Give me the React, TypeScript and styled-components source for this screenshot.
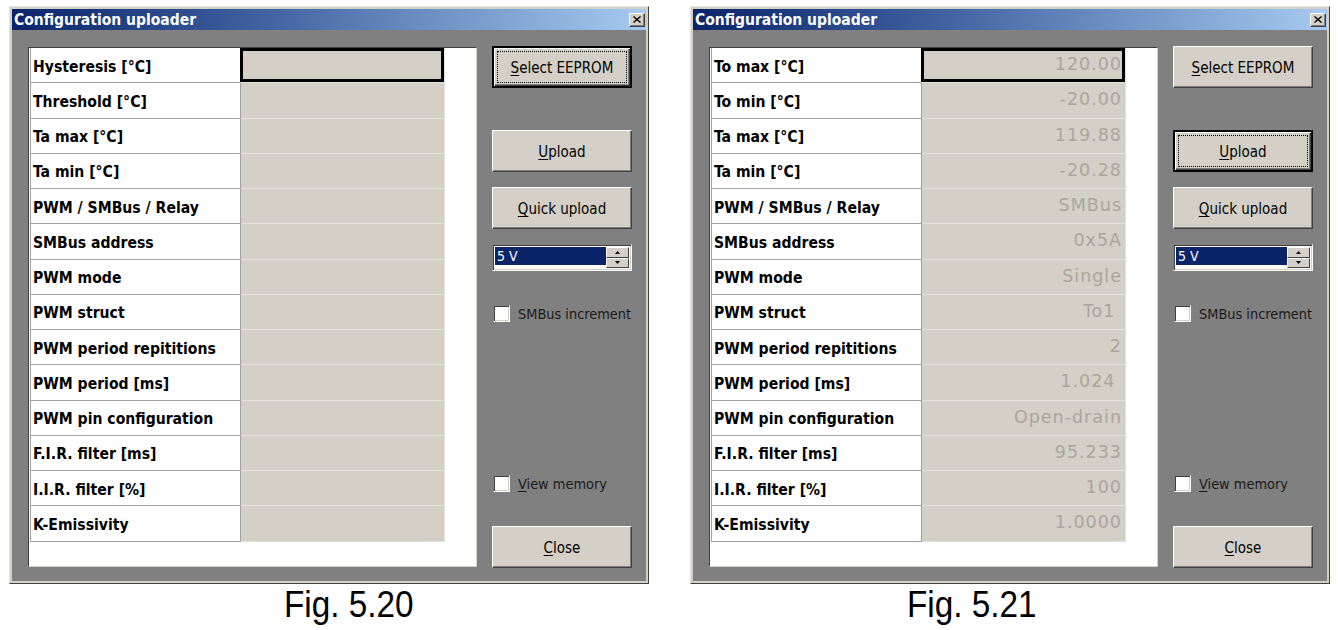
import React from "react";
import styled, { createGlobalStyle, css } from "styled-components";

const UI_FONT = `"DejaVu Sans Condensed", "DejaVu Sans", "Liberation Sans", sans-serif`;

const Global = createGlobalStyle`
  html, body { margin: 0; padding: 0; background: #ffffff; }
  body { font-family: ${UI_FONT}; }
  * { box-sizing: border-box; }
`;

const Page = styled.div`
  display: flex;
  gap: 41px;
  padding: 6px 0 0 9px;
  width: 1338px;
  height: 630px;
  overflow: hidden;
`;

const Figure = styled.div`
  display: flex;
  flex-direction: column;
  width: 640px;
`;

const Window = styled.div`
  width: 640px;
  height: 578px;
  padding: 2px;
  background: #d4d0c8;
  border: 1px solid;
  border-color: #e8e6e1 #404040 #404040 #e8e6e1;
  display: flex;
  flex-direction: column;
`;

const TitleBar = styled.div`
  height: 21px;
  flex: none;
  display: flex;
  align-items: center;
  justify-content: space-between;
  padding: 0 1px 0 2px;
  background: linear-gradient(to right, #0a246a 0%, #3a5a9a 35%, #a6caf0 100%);
`;

const TitleText = styled.span`
  color: #ffffff;
  font-family: ${UI_FONT};
  font-weight: bold;
  font-size: 15.5px;
  white-space: nowrap;
`;

const TitleClose = styled.div`
  width: 16px;
  height: 14px;
  background: #d4d0c8;
  border: 1px solid;
  border-color: #ffffff #404040 #404040 #ffffff;
  box-shadow: inset -1px -1px 0 #808080;
  display: flex;
  align-items: center;
  justify-content: center;
`;

const Body = styled.div`
  flex: 1;
  background: #808080;
  display: flex;
  gap: 15px;
  padding: 16px 14px 13px 16px;
`;

const GridPanel = styled.div`
  width: 449px;
  height: 520px;
  margin-top: 1px;
  background: #ffffff;
  border: 1px solid;
  border-color: #404040 #d4d0c8 #d4d0c8 #404040;
  padding-left: 1px;
`;

const Table = styled.div`
  display: grid;
  grid-template-columns: 210px 204px;
  grid-auto-rows: 35.26px;
  width: 415px;
  border-left: 1px solid #a0a0a0;
`;

const LabelCell = styled.div`
  background: #ffffff;
  border-right: 1px solid #a0a0a0;
  border-bottom: 1px solid #a0a0a0;
  display: flex;
  align-items: center;
  padding: 3px 0 0 2px;
  font-family: ${UI_FONT};
  font-weight: bold;
  font-size: 15.6px;
  color: #000000;
  white-space: nowrap;
`;

const ValueCell = styled.div<{ $focus?: boolean }>`
  background: #d4d0c8;
  border-right: 1px solid #e4e2dd;
  border-bottom: 1px solid #e4e2dd;
  display: flex;
  align-items: center;
  justify-content: flex-end;
  padding: 0 3px 2px 0;
  font-family: "DejaVu Sans", "Liberation Sans", sans-serif;
  font-weight: normal;
  font-size: 17.5px;
  letter-spacing: 1px;
  color: #aaa69e;
  white-space: nowrap;
  ${(p) =>
    p.$focus &&
    css`
      margin-left: -1px;
      box-shadow: inset 0 0 0 3px #000000;
    `}
`;

const Column = styled.div`
  width: 140px;
  display: flex;
  flex-direction: column;
`;

const Button = styled.div<{ $default?: boolean; $mt?: number }>`
  position: relative;
  width: 140px;
  height: 42px;
  margin-top: ${(p) => p.$mt ?? 0}px;
  flex: none;
  background: #d4d0c8;
  display: flex;
  align-items: center;
  justify-content: center;
  padding-top: 2px;
  font-family: ${UI_FONT};
  font-size: 15px;
  color: #000000;
  border: 1px solid;
  border-color: #ffffff #404040 #404040 #ffffff;
  box-shadow: inset -1px -1px 0 #808080;
  ${(p) =>
    p.$default &&
    css`
      border: 2px solid #000000;
      box-shadow: inset 1px 1px 0 #ffffff, inset -1px -1px 0 #404040,
        inset -2px -2px 0 #808080;
      &::after {
        content: "";
        position: absolute;
        inset: 3px;
        border: 1px dotted #000000;
      }
    `}
`;

const Mnemonic = styled.span`
  text-decoration: underline;
  text-underline-offset: 2px;
`;

const Spin = styled.div`
  width: 140px;
  height: 27px;
  margin-top: 15px;
  flex: none;
  display: flex;
  background: #ffffff;
  border: 1px solid;
  border-color: #808080 #ffffff #ffffff #808080;
  box-shadow: inset 1px 1px 0 #404040, inset -1px -1px 0 #d4d0c8;
  padding: 2px;
`;

const SpinField = styled.div`
  flex: 1;
  display: flex;
  flex-direction: column;
`;

const SpinValue = styled.div`
  height: 18px;
  background: #0a246a;
  color: #ffffff;
  font-family: ${UI_FONT};
  font-size: 14px;
  line-height: 18px;
  padding-left: 2px;
`;

const SpinButtons = styled.div`
  width: 23px;
  display: flex;
  flex-direction: column;
`;

const SpinBtn = styled.div`
  flex: 1;
  background: #d4d0c8;
  border: 1px solid;
  border-color: #ffffff #404040 #404040 #ffffff;
  display: flex;
  align-items: center;
  justify-content: center;
`;

const CheckRow = styled.div<{ $auto?: boolean; $mt?: number }>`
  display: flex;
  align-items: center;
  gap: 8px;
  margin-left: 1px;
  height: 17px;
  flex: none;
  margin-top: ${(p) => (p.$auto ? "auto" : `${p.$mt ?? 0}px`)};
  font-family: ${UI_FONT};
  font-size: 14.4px;
  color: #1a1a1a;
  white-space: nowrap;
`;

const CheckBox = styled.div`
  width: 17px;
  height: 17px;
  flex: none;
  background: #ffffff;
  border: 1px solid;
  border-color: #808080 #ffffff #ffffff #808080;
  box-shadow: inset 1px 1px 0 #404040, inset -1px -1px 0 #d4d0c8;
`;

const Caption = styled.div<{ $left: number }>`
  margin-top: 2px;
  padding-left: ${(p) => p.$left}px;
  font-family: "Liberation Sans", Arial, sans-serif;
  font-size: 37px;
  line-height: 37px;
  color: #000000;
`;

const CaptionText = styled.span`
  display: inline-block;
  transform: scaleX(0.9);
  transform-origin: left center;
  white-space: nowrap;
`;

const CloseGlyph = () => (
  <svg width="8" height="7" viewBox="0 0 8 7">
    <path d="M0.5 0.5 L7.5 6.5 M7.5 0.5 L0.5 6.5" stroke="#000" strokeWidth="1.4" />
  </svg>
);

const Up = () => (
  <svg width="5" height="3" viewBox="0 0 5 3">
    <path d="M2.5 0 L5 3 L0 3 Z" fill="#000" />
  </svg>
);

const Down = () => (
  <svg width="5" height="3" viewBox="0 0 5 3">
    <path d="M0 0 L5 0 L2.5 3 Z" fill="#000" />
  </svg>
);

type Row = { label: string; value?: string };

const rows1: Row[] = [
  { label: "Hysteresis [°C]" },
  { label: "Threshold [°C]" },
  { label: "Ta max [°C]" },
  { label: "Ta min [°C]" },
  { label: "PWM / SMBus / Relay" },
  { label: "SMBus address" },
  { label: "PWM mode" },
  { label: "PWM struct" },
  { label: "PWM period repititions" },
  { label: "PWM period [ms]" },
  { label: "PWM pin configuration" },
  { label: "F.I.R. filter [ms]" },
  { label: "I.I.R. filter [%]" },
  { label: "K-Emissivity" },
];

const rows2: Row[] = [
  { label: "To max [°C]", value: "120.00" },
  { label: "To min [°C]", value: "-20.00" },
  { label: "Ta max [°C]", value: "119.88" },
  { label: "Ta min [°C]", value: "-20.28" },
  { label: "PWM / SMBus / Relay", value: "SMBus" },
  { label: "SMBus address", value: "0x5A" },
  { label: "PWM mode", value: "Single" },
  { label: "PWM struct", value: "To1\u00a0" },
  { label: "PWM period repititions", value: "2" },
  { label: "PWM period [ms]", value: "1.024\u00a0" },
  { label: "PWM pin configuration", value: "Open-drain" },
  { label: "F.I.R. filter [ms]", value: "95.233" },
  { label: "I.I.R. filter [%]", value: "100" },
  { label: "K-Emissivity", value: "1.0000" },
];

const Uploader: React.FC<{ rows: Row[]; defaultBtn: "select" | "upload" }> = ({ rows, defaultBtn }) => (
  <Window>
    <TitleBar>
      <TitleText>Configuration uploader</TitleText>
      <TitleClose>
        <CloseGlyph />
      </TitleClose>
    </TitleBar>
    <Body>
      <GridPanel>
        <Table>
          {rows.map((r, i) => (
            <React.Fragment key={r.label}>
              <LabelCell>{r.label}</LabelCell>
              <ValueCell $focus={i === 0}>{r.value ?? ""}</ValueCell>
            </React.Fragment>
          ))}
        </Table>
      </GridPanel>
      <Column>
        <Button $default={defaultBtn === "select"}>
          <span>
            <Mnemonic>S</Mnemonic>elect EEPROM
          </span>
        </Button>
        <Button $mt={42} $default={defaultBtn === "upload"}>
          <span>
            <Mnemonic>U</Mnemonic>pload
          </span>
        </Button>
        <Button $mt={15}>
          <span>
            <Mnemonic>Q</Mnemonic>uick upload
          </span>
        </Button>
        <Spin>
          <SpinField>
            <SpinValue>5 V</SpinValue>
          </SpinField>
          <SpinButtons>
            <SpinBtn>
              <Up />
            </SpinBtn>
            <SpinBtn>
              <Down />
            </SpinBtn>
          </SpinButtons>
        </Spin>
        <CheckRow $mt={34}>
          <CheckBox />
          <span>SMBus increment</span>
        </CheckRow>
        <CheckRow $auto>
          <CheckBox />
          <span>
            <Mnemonic>V</Mnemonic>iew memory
          </span>
        </CheckRow>
        <Button $mt={34}>
          <span>
            <Mnemonic>C</Mnemonic>lose
          </span>
        </Button>
      </Column>
    </Body>
  </Window>
);

export default function App() {
  return (
    <>
      <Global />
      <Page>
        <Figure>
          <Uploader rows={rows1} defaultBtn="select" />
          <Caption $left={275}>
            <CaptionText>Fig. 5.20</CaptionText>
          </Caption>
        </Figure>
        <Figure>
          <Uploader rows={rows2} defaultBtn="upload" />
          <Caption $left={217}>
            <CaptionText>Fig. 5.21</CaptionText>
          </Caption>
        </Figure>
      </Page>
    </>
  );
}
